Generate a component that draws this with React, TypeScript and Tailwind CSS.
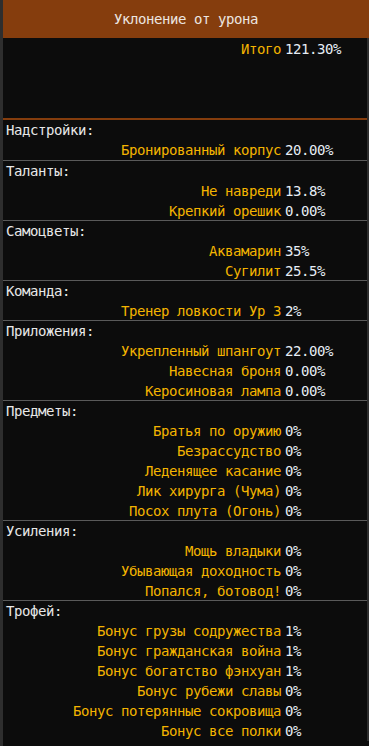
const sections: { title: string; rows: [string, string][] }[] = [
  { title: "Надстройки:", rows: [["Бронированный корпус", "20.00%"]] },
  {
    title: "Таланты:",
    rows: [
      ["Не навреди", "13.8%"],
      ["Крепкий орешик", "0.00%"],
    ],
  },
  {
    title: "Самоцветы:",
    rows: [
      ["Аквамарин", "35%"],
      ["Сугилит", "25.5%"],
    ],
  },
  { title: "Команда:", rows: [["Тренер ловкости Ур 3", "2%"]] },
  {
    title: "Приложения:",
    rows: [
      ["Укрепленный шпангоут", "22.00%"],
      ["Навесная броня", "0.00%"],
      ["Керосиновая лампа", "0.00%"],
    ],
  },
  {
    title: "Предметы:",
    rows: [
      ["Братья по оружию", "0%"],
      ["Безрассудство", "0%"],
      ["Леденящее касание", "0%"],
      ["Лик хирурга (Чума)", "0%"],
      ["Посох плута (Огонь)", "0%"],
    ],
  },
  {
    title: "Усиления:",
    rows: [
      ["Мощь владыки", "0%"],
      ["Убывающая доходность", "0%"],
      ["Попался, ботовод!", "0%"],
    ],
  },
  {
    title: "Трофей:",
    rows: [
      ["Бонус грузы содружества", "1%"],
      ["Бонус гражданская война", "1%"],
      ["Бонус богатство фэнхуан", "1%"],
      ["Бонус рубежи славы", "0%"],
      ["Бонус потерянные сокровища", "0%"],
      ["Бонус все полки", "0%"],
    ],
  },
];

function StatRow({ label, value, className = "h-5" }: { label: string; value: string; className?: string }) {
  return (
    <div className={`grid grid-cols-[278px_1fr] items-center gap-x-[4px] ${className}`}>
      <span className="whitespace-nowrap text-right text-[#f4b400]">{label}</span>
      <span className="whitespace-nowrap text-[#e6edf5]">{value}</span>
    </div>
  );
}

export default function App() {
  const last = sections.length - 1;
  return (
    <div
      className="min-h-screen border-l-[3px] border-[#2e2e2e] bg-[#0c0c0c] text-[14px] leading-5 tracking-[-0.43px]"
      style={{ fontFamily: '"DejaVu Sans Mono", "Liberation Mono", monospace' }}
    >
      <div className="flex h-[38px] items-center justify-center bg-[#853d0d] text-[#ece6e0]">
        Уклонение от урона
      </div>

      <div className="border-r-2 border-[#2e2e2e]">
        <div className="h-[82px] border-b-2 border-[#853d0d] pt-px">
          <StatRow label="Итого" value="121.30%" />
        </div>

        {sections.map((s, i) => (
          <section key={s.title} className={i < last ? "border-b border-[#5a5a5a]" : ""}>
            <div className="h-5 pl-[3px] text-[#e8e8e8]">{s.title}</div>
            {s.rows.map(([label, value], j) => (
              <StatRow
                key={label}
                label={label}
                value={value}
                className={j === s.rows.length - 1 && i > 0 && i < last ? "h-[19px]" : "h-5"}
              />
            ))}
          </section>
        ))}
      </div>
    </div>
  );
}
